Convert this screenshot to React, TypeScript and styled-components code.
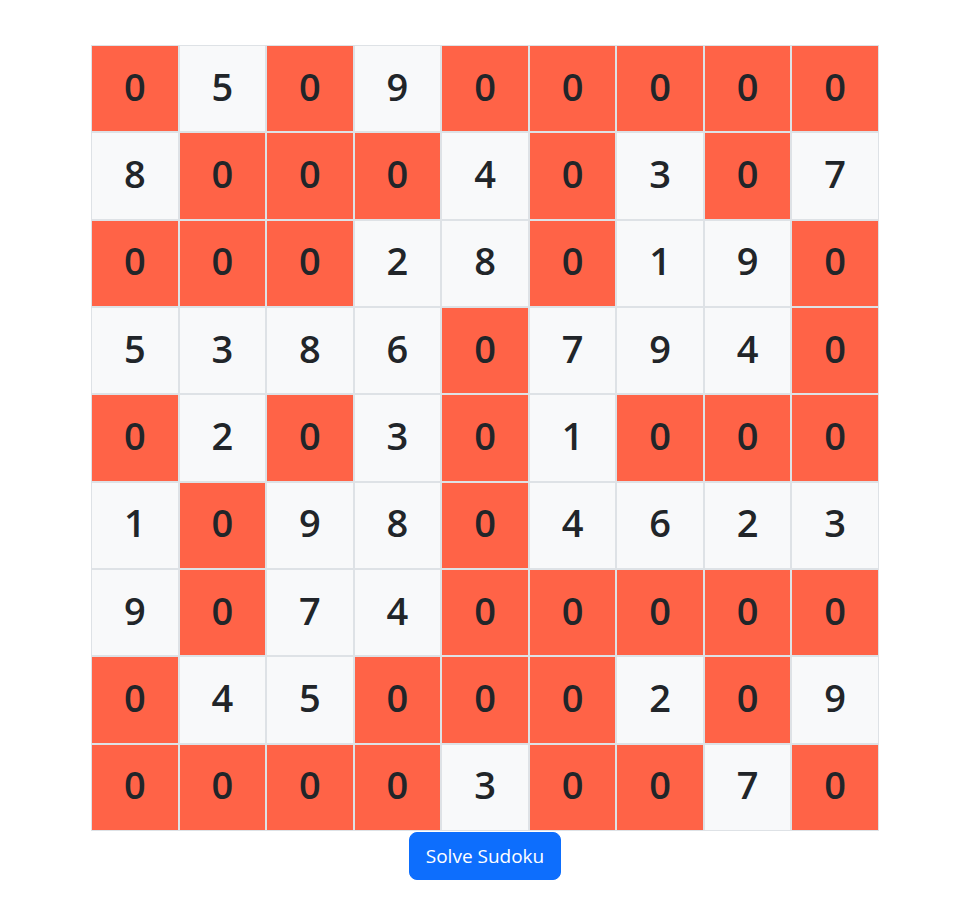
import styled, { createGlobalStyle } from 'styled-components';

const GlobalStyle = createGlobalStyle`
  html, body {
    margin: 0;
    padding: 0;
    background: #fff;
    font-family: "Open Sans", "Noto Sans", sans-serif;
    color: #212529;
  }
`;

const board: number[][] = [
  [0, 5, 0, 9, 0, 0, 0, 0, 0],
  [8, 0, 0, 0, 4, 0, 3, 0, 7],
  [0, 0, 0, 2, 8, 0, 1, 9, 0],
  [5, 3, 8, 6, 0, 7, 9, 4, 0],
  [0, 2, 0, 3, 0, 1, 0, 0, 0],
  [1, 0, 9, 8, 0, 4, 6, 2, 3],
  [9, 0, 7, 4, 0, 0, 0, 0, 0],
  [0, 4, 5, 0, 0, 0, 2, 0, 9],
  [0, 0, 0, 0, 3, 0, 0, 7, 0]
];

export default function App(): JSX.Element {
  return (
    <>
      <GlobalStyle />
      <Page>
        <Board>
          {board.map((row, r) =>
            row.map((value, c) => (
              <Cell key={`${r}-${c}`} $empty={value === 0}>
                {value}
              </Cell>
            ))
          )}
        </Board>
        <SolveButton type="button">Solve Sudoku</SolveButton>
      </Page>
    </>
  );
}

const Page = styled.div`
  display: flex;
  flex-direction: column;
  align-items: center;
  padding: 45px 0 0 12px;
`;

const Board = styled.div`
  display: grid;
  grid-template-columns: repeat(9, 87.55px);
  grid-template-rows: repeat(9, 87.33px);
`;

const Cell = styled.div<{ $empty: boolean }>`
  box-sizing: border-box;
  display: flex;
  align-items: center;
  justify-content: center;
  border: 1px solid #dee2e6;
  background-color: ${(p) => (p.$empty ? '#ff6347' : '#f8f9fa')};
  font-size: 38px;
  font-weight: 600;
  color: #212529;
  padding-bottom: 6px;
`;

const SolveButton = styled.button`
  margin-top: 1px;
  height: 48px;
  padding: 0 16px;
  border: 1px solid #0d6efd;
  border-radius: 8px;
  background-color: #0d6efd;
  color: #fff;
  font-family: "Open Sans", "Noto Sans", sans-serif;
  font-size: 19px;
  cursor: pointer;
`;
